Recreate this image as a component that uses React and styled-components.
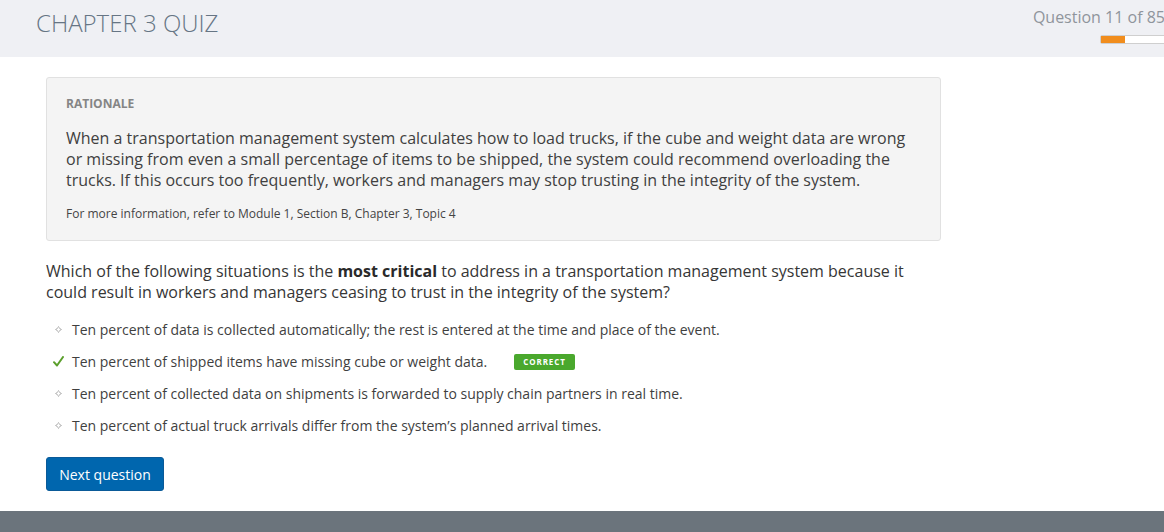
import React from "react";
import styled, { createGlobalStyle } from "styled-components";

const Global = createGlobalStyle`
  html, body { margin: 0; padding: 0; background: #ffffff; }
  body { font-family: "Open Sans", "Noto Sans", sans-serif; color: #3a3a3a; overflow: hidden; }
  * { box-sizing: border-box; }
`;

const Page = styled.div`
  width: 1164px;
  height: 532px;
  display: flex;
  flex-direction: column;
  overflow: hidden;
`;

const Header = styled.header`
  height: 57px;
  background: #eff0f4;
  display: flex;
  justify-content: space-between;
  align-items: flex-start;
  padding-left: 36px;
  overflow: hidden;
  flex-shrink: 0;
`;

const Title = styled.h1`
  margin: 7px 0 0;
  font-size: 24px;
  font-weight: 300;
  color: #667584;
  letter-spacing: 0;
  line-height: 32px;
`;

const Counter = styled.div`
  width: 140px;
  display: flex;
  flex-direction: column;
  flex-shrink: 0;
  padding-top: 6px;
`;

const CounterText = styled.div`
  font-size: 16px;
  color: #8f959c;
  text-align: right;
  line-height: 23px;
  white-space: nowrap;
  margin-right: -1px;
`;

const Bar = styled.div`
  margin: 6px 0 0 76px;
  width: 90px;
  height: 9px;
  background: #ffffff;
  border: 1px solid #cfcfcf;
  border-radius: 2px;
`;

const Fill = styled.div`
  height: 100%;
  background: #f18d1d;
`;

const Main = styled.main`
  flex: 1;
  padding: 20px 0 0 46px;
`;

const Rationale = styled.section`
  width: 895px;
  background: #f4f4f4;
  border: 1px solid #e1e1e1;
  border-radius: 3px;
  padding: 16px 19px 18px 19px;
`;

const Label = styled.div`
  font-size: 12px;
  font-weight: 700;
  color: #858585;
  line-height: 20px;
  margin-bottom: 14px;
`;

const Body = styled.p`
  margin: 0;
  font-size: 16px;
  line-height: 21px;
  color: #404040;
`;

const Note = styled.p`
  margin: 15px 0 0;
  font-size: 12px;
  line-height: 16px;
  color: #444;
`;

const Question = styled.p`
  width: 895px;
  margin: 20px 0 0;
  font-size: 16px;
  line-height: 21px;
  color: #363636;
  b { font-weight: 700; color: #2a2a2a; }
`;

const Options = styled.ul`
  list-style: none;
  margin: 17px 0 0;
  padding: 0;
  display: flex;
  flex-direction: column;
  gap: 13px;
`;

const Option = styled.li`
  display: flex;
  align-items: center;
  height: 19px;
  font-size: 14px;
  color: #3f3f3f;
`;

const Marker = styled.span`
  width: 26px;
  display: flex;
  align-items: center;
  padding-left: ${(p) => (p.$check ? "7px" : "9px")};
`;

const Badge = styled.span`
  margin-left: 27px;
  background: #4aa82d;
  color: #fff;
  font-size: 8px;
  font-weight: 700;
  letter-spacing: 0.9px;
  border-radius: 2px;
  padding: 0 9px;
  height: 16px;
  line-height: 16px;
`;

const Button = styled.button`
  margin-top: 22px;
  width: 118px;
  height: 34px;
  background: #0066ae;
  border: 1px solid #0a5a98;
  border-radius: 3px;
  color: #fff;
  font-family: "Open Sans", "Noto Sans", sans-serif;
  font-size: 14px;
  font-weight: 500;
  cursor: pointer;
  padding: 0;
`;

const Footer = styled.footer`
  height: 21px;
  background: #6b747c;
  flex-shrink: 0;
`;

const Dot = () => (
  <svg width="7" height="7" viewBox="0 0 7 7">
    <rect x="3" y="0" width="1" height="1" fill="#c8c8c8" />
    <rect x="2" y="1" width="3" height="1" fill="#d6d6d6" />
    <rect x="1" y="2" width="2" height="1" fill="#cfcfcf" />
    <rect x="4" y="2" width="2" height="1" fill="#cfcfcf" />
    <rect x="0" y="3" width="2" height="1" fill="#c8c8c8" />
    <rect x="5" y="3" width="2" height="1" fill="#c8c8c8" />
    <rect x="1" y="4" width="2" height="1" fill="#cfcfcf" />
    <rect x="4" y="4" width="2" height="1" fill="#cfcfcf" />
    <rect x="2" y="5" width="3" height="1" fill="#d6d6d6" />
    <rect x="3" y="6" width="1" height="1" fill="#c8c8c8" />
  </svg>
);

const Check = () => (
  <svg width="11" height="11" viewBox="0 0 11 11">
    <path d="M1 6.2 L4 9.5 L10 1" fill="none" stroke="#5b9f2c" strokeWidth="2" strokeLinecap="round" strokeLinejoin="round" />
  </svg>
);

const options = [
  { text: "Ten percent of data is collected automatically; the rest is entered at the time and place of the event." },
  { text: "Ten percent of shipped items have missing cube or weight data.", correct: true },
  { text: "Ten percent of collected data on shipments is forwarded to supply chain partners in real time." },
  { text: "Ten percent of actual truck arrivals differ from the system\u2019s planned arrival times." },
];

export default function App() {
  return (
    <Page>
      <Global />
      <Header>
        <Title>CHAPTER 3 QUIZ</Title>
        <Counter>
          <CounterText>Question 11 of 85</CounterText>
          <Bar>
            <Fill style={{ width: `${Math.round((11 / 85) * 90 * 2.05)}px` }} />
          </Bar>
        </Counter>
      </Header>
      <Main>
        <Rationale>
          <Label>RATIONALE</Label>
          <Body>
            When a transportation management system calculates how to load trucks, if the cube and weight data are wrong
            or missing from even a small percentage of items to be shipped, the system could recommend overloading the
            trucks. If this occurs too frequently, workers and managers may stop trusting in the integrity of the system.
          </Body>
          <Note>For more information, refer to Module 1, Section B, Chapter 3, Topic 4</Note>
        </Rationale>
        <Question>
          Which of the following situations is the <b>most critical</b> to address in a transportation management system
          because it could result in workers and managers ceasing to trust in the integrity of the system?
        </Question>
        <Options>
          {options.map((o) => (
            <Option key={o.text}>
              <Marker $check={o.correct}>{o.correct ? <Check /> : <Dot />}</Marker>
              {o.text}
              {o.correct && <Badge>CORRECT</Badge>}
            </Option>
          ))}
        </Options>
        <Button>Next question</Button>
      </Main>
      <Footer />
    </Page>
  );
}
